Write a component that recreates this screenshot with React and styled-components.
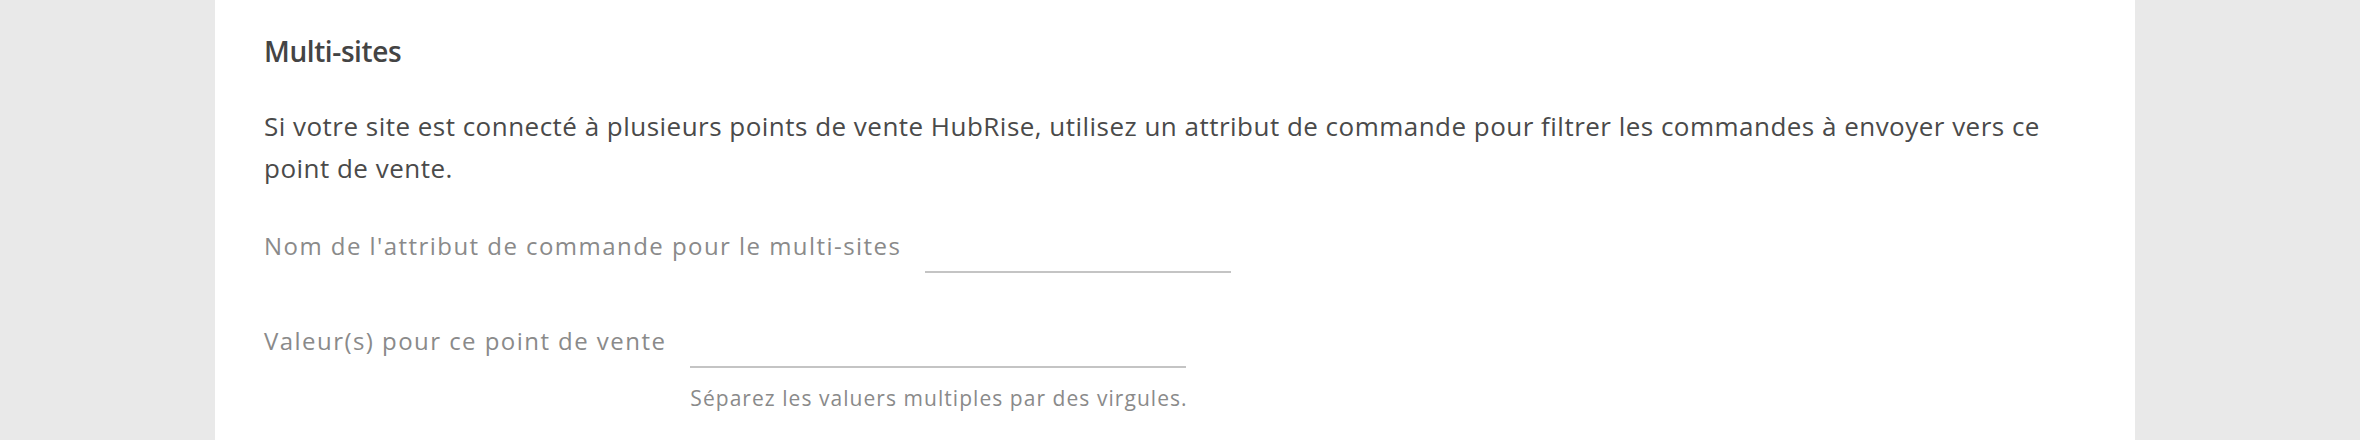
import React from "react";
import styled, { createGlobalStyle } from "styled-components";

const GlobalStyle = createGlobalStyle`
  html, body {
    margin: 0;
    padding: 0;
    background: #e9e9e9;
    font-family: "Open Sans", "Noto Sans", "Liberation Sans", sans-serif;
  }
`;

const Page = styled.div`
  display: flex;
  padding-left: 215px;
  height: 440px;
  overflow: hidden;
`;

const Card = styled.section`
  width: 1920px;
  box-sizing: border-box;
  background: #ffffff;
  padding: 31px 49px 0 49px;
`;

const Title = styled.h3`
  margin: 0 0 34px 0;
  font-size: 28px;
  line-height: 40px;
  font-weight: 600;
  letter-spacing: -0.4px;
  color: #444444;
`;

const Intro = styled.p`
  margin: 0 0 35px 0;
  font-size: 26px;
  line-height: 42px;
  letter-spacing: 0.48px;
  color: #4a4a4a;
`;

const FieldRow = styled.div`
  display: flex;
  align-items: flex-start;
  gap: 24px;
  margin-bottom: ${({ $spacing }) => $spacing || 0}px;
`;

const Label = styled.label`
  font-size: 24px;
  line-height: 44px;
  letter-spacing: 1.45px;
  color: #8a8a8a;
  white-space: nowrap;
`;

const Control = styled.div`
  display: flex;
  flex-direction: column;
  width: ${({ $width }) => $width}px;
`;

const Input = styled.input`
  box-sizing: border-box;
  width: 100%;
  height: 49px;
  border: none;
  border-bottom: 2px solid #c4c4c4;
  outline: none;
  background: transparent;
  font: inherit;
  font-size: 24px;
  color: #444444;
  padding: 0;
`;

const Help = styled.span`
  margin-top: 15px;
  font-size: 21px;
  line-height: 30px;
  letter-spacing: 1.05px;
  color: #8a8a8a;
  white-space: nowrap;
`;

export default function App() {
  return (
    <>
      <GlobalStyle />
      <Page>
        <Card>
          <Title>Multi-sites</Title>
          <Intro>
            Si votre site est connecté à plusieurs points de vente HubRise,
            utilisez un attribut de commande pour filtrer les commandes à
            envoyer vers ce point de vente.
          </Intro>
          <FieldRow $spacing={46}>
            <Label htmlFor="multi-site-attr">
              Nom de l'attribut de commande pour le multi-sites
            </Label>
            <Control $width={306}>
              <Input id="multi-site-attr" type="text" />
            </Control>
          </FieldRow>
          <FieldRow>
            <Label htmlFor="multi-site-values">Valeur(s) pour ce point de vente</Label>
            <Control $width={496}>
              <Input id="multi-site-values" type="text" />
              <Help>Séparez les valuers multiples par des virgules.</Help>
            </Control>
          </FieldRow>
        </Card>
      </Page>
    </>
  );
}
